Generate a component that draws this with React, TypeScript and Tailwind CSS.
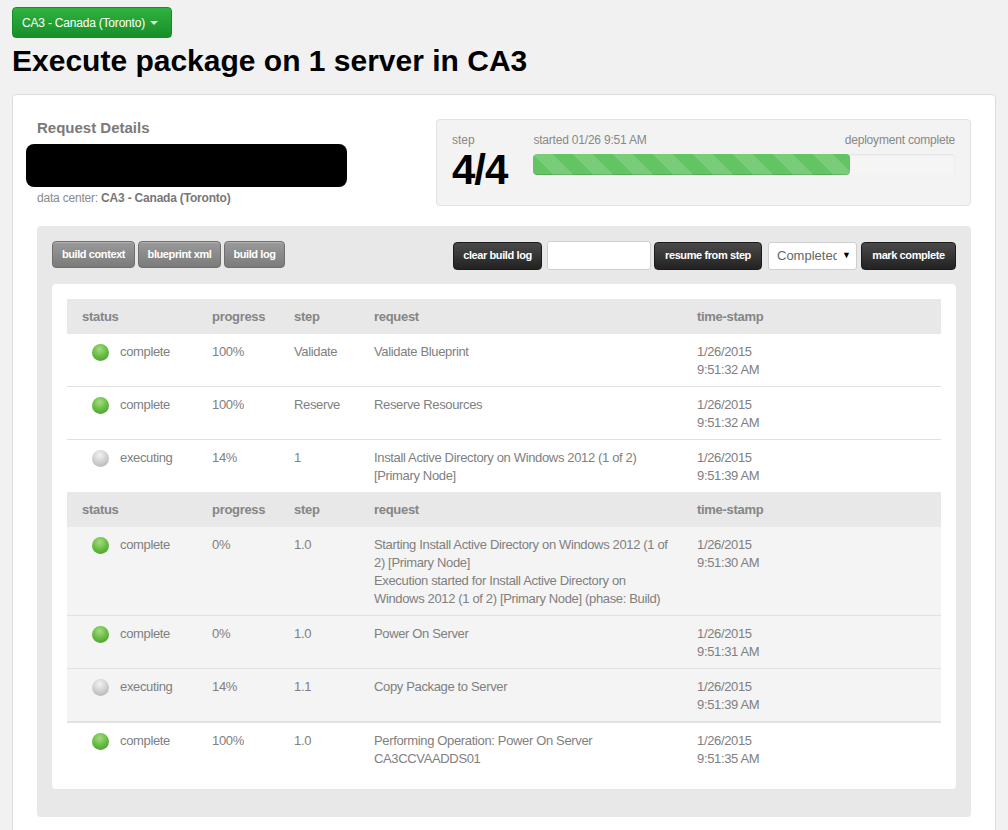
import React from 'react'

type Row = {
  status: 'complete' | 'executing'
  progress: string
  step: string
  request: string[]
  time: [string, string]
}

const TOP_ROWS: Row[] = [
  { status: 'complete', progress: '100%', step: 'Validate', request: ['Validate Blueprint'], time: ['1/26/2015', '9:51:32 AM'] },
  { status: 'complete', progress: '100%', step: 'Reserve', request: ['Reserve Resources'], time: ['1/26/2015', '9:51:32 AM'] },
  { status: 'executing', progress: '14%', step: '1', request: ['Install Active Directory on Windows 2012 (1 of 2) [Primary Node]'], time: ['1/26/2015', '9:51:39 AM'] },
]

const SUB_ROWS: Row[] = [
  {
    status: 'complete',
    progress: '0%',
    step: '1.0',
    request: [
      'Starting Install Active Directory on Windows 2012 (1 of 2) [Primary Node]',
      'Execution started for Install Active Directory on Windows 2012 (1 of 2) [Primary Node] (phase: Build)',
    ],
    time: ['1/26/2015', '9:51:30 AM'],
  },
  { status: 'complete', progress: '0%', step: '1.0', request: ['Power On Server'], time: ['1/26/2015', '9:51:31 AM'] },
  { status: 'executing', progress: '14%', step: '1.1', request: ['Copy Package to Server'], time: ['1/26/2015', '9:51:39 AM'] },
]

const LAST_ROW: Row = {
  status: 'complete',
  progress: '100%',
  step: '1.0',
  request: ['Performing Operation: Power On Server CA3CCVAADDS01'],
  time: ['1/26/2015', '9:51:35 AM'],
}

const GRID = 'grid grid-cols-[130px_82px_80px_323px_1fr]'

function StatusDot({ status }: { status: Row['status'] }) {
  return (
    <span
      className={`mt-[1px] block w-[17px] h-[17px] rounded-full flex-shrink-0 ${
        status === 'complete'
          ? 'bg-[radial-gradient(circle_at_45%_30%,#a4dc84_0%,#6cbf45_45%,#3f9424_100%)]'
          : 'bg-[radial-gradient(circle_at_45%_30%,#f2f2f2_0%,#cfcfcf_50%,#a9a9a9_100%)]'
      }`}
    />
  )
}

function HeaderRow() {
  return (
    <div className={`${GRID} h-[35px] items-center bg-[#e8e8e8] text-[13px] font-bold tracking-[-0.3px] text-[#858585]`}>
      <div className="pl-[15px]">status</div>
      <div className="pl-[15px]">progress</div>
      <div className="pl-[15px]">step</div>
      <div className="pl-[15px]">request</div>
      <div className="pl-[15px]">time-stamp</div>
    </div>
  )
}

function DataRow({ row, border = true, thick = false }: { row: Row; border?: boolean; thick?: boolean }) {
  return (
    <div
      className={`${GRID} pt-[9px] pb-[7px] text-[13px] leading-[18px] tracking-[-0.35px] text-[#808080] ${
        thick ? 'border-b-[2px] border-[#e2e2e2]' : border ? 'border-b border-[#e0e0e0]' : ''
      }`}
    >
      <div className="pl-[25px] flex items-start gap-[11px]">
        <StatusDot status={row.status} />
        <span>{row.status}</span>
      </div>
      <div className="pl-[15px]">{row.progress}</div>
      <div className="pl-[15px]">{row.step}</div>
      <div className="pl-[15px] pr-[8px]">
        {row.request.map((r) => (
          <div key={r}>{r}</div>
        ))}
      </div>
      <div className="pl-[15px]">
        <div>{row.time[0]}</div>
        <div>{row.time[1]}</div>
      </div>
    </div>
  )
}

function GrayButton({ children, w }: { children: React.ReactNode; w: string }) {
  return (
    <button
      className={`${w} h-[27px] rounded-[4px] border border-[#6f6f6f] bg-[linear-gradient(#9a9a9a,#7b7b7b)] text-[11px] font-bold tracking-[-0.4px] text-white shadow-[inset_0_1px_0_rgba(255,255,255,0.25)]`}
    >
      {children}
    </button>
  )
}

function DarkButton({ children, w }: { children: React.ReactNode; w: string }) {
  return (
    <button
      className={`${w} h-[28px] rounded-[4px] border border-[#1c1c1c] bg-[linear-gradient(#4a4a4a,#222222)] text-[11px] font-bold tracking-[-0.4px] text-white`}
    >
      {children}
    </button>
  )
}

export default function App() {
  return (
    <div className="min-h-screen bg-[#f1f1f1] px-3 pt-[7px] font-['Liberation_Sans',Arial,sans-serif] overflow-hidden">
      {/* Data center switcher */}
      <button className="h-[31px] w-[160px] flex items-center gap-[5px] pl-[9px] rounded-[4px] border border-[#1b8a2b] bg-[linear-gradient(#30b23f,#178f2a)] text-[12px] tracking-[-0.2px] text-white">
        CA3 - Canada (Toronto)
        <span className="block w-0 h-0 border-l-[4px] border-r-[4px] border-t-[4px] border-l-transparent border-r-transparent border-t-[#d9f2dc]" />
      </button>

      <h1 className="mt-[5px] text-[30px] leading-[36px] font-bold text-black">Execute package on 1 server in CA3</h1>

      <div className="mt-[15px] w-[984px] bg-white border border-[#dcdcdc] rounded-[4px] px-[24px] pt-[24px] pb-[40px]">
        {/* Summary */}
        <div className="flex justify-between">
          <div>
            <h2 className="text-[15px] leading-[18px] font-bold text-[#7a7a7a]">Request Details</h2>
            <div className="mt-[7px] -ml-[11px] w-[321px] h-[43px] rounded-[8px] bg-black" />
            <p className="mt-[3px] text-[12px] leading-[16px] tracking-[-0.2px] text-[#8a8a8a]">
              data center: <span className="font-bold text-[#777]">CA3 - Canada (Toronto)</span>
            </p>
          </div>

          <div className="w-[535px] h-[87px] bg-[#f3f3f3] border border-[#e2e2e2] rounded-[4px] pl-[15px] pr-[15px] pt-[12px] flex gap-[26px]">
            <div>
              <div className="text-[12px] leading-[16px] text-[#888]">step</div>
              <div className="text-[42px] leading-[44px] font-bold tracking-[-1px] text-black">4/4</div>
            </div>
            <div className="flex-1">
              <div className="flex justify-between text-[12px] leading-[16px] tracking-[-0.2px] text-[#888]">
                <span>started 01/26 9:51 AM</span>
                <span>deployment complete</span>
              </div>
              <div className="mt-[6px] h-[21px] rounded-[4px] bg-[#f5f5f5] shadow-[inset_0_1px_2px_rgba(0,0,0,0.08)] overflow-hidden">
                <div className="h-full w-[75%] rounded-[4px] bg-[#62c462] bg-[linear-gradient(45deg,rgba(255,255,255,0.15)_25%,transparent_25%,transparent_50%,rgba(255,255,255,0.15)_50%,rgba(255,255,255,0.15)_75%,transparent_75%,transparent)] bg-[length:40px_40px] shadow-[inset_0_-1px_0_rgba(0,0,0,0.12)]" />
              </div>
            </div>
          </div>
        </div>

        {/* Build log panel */}
        <div className="mt-[20px] bg-[#e8e8e8] rounded-[4px] px-[15px] pt-[15px] pb-[28px]">
          <div className="flex justify-between items-start">
            <div className="flex gap-[3px]">
              <GrayButton w="w-[83px]">build context</GrayButton>
              <GrayButton w="w-[83px]">blueprint xml</GrayButton>
              <GrayButton w="w-[61px]">build log</GrayButton>
            </div>
            <div className="flex items-center">
              <DarkButton w="w-[89px]">clear build log</DarkButton>
              <input className="ml-[5px] w-[104px] h-[29px] bg-white border border-[#cfcfcf] rounded-[3px]" />
              <div className="ml-[3px]">
                <DarkButton w="w-[108px]">resume from step</DarkButton>
              </div>
              <div className="ml-[6px] w-[89px] h-[28px] bg-white border border-[#cfcfcf] rounded-[3px] flex items-center justify-between pl-[8px] pr-[5px] text-[13px] text-[#666] overflow-hidden">
                <span className="whitespace-nowrap overflow-hidden w-[60px]">Completed</span>
                <span className="text-[9px] text-black">▼</span>
              </div>
              <div className="ml-[4px]">
                <DarkButton w="w-[95px]">mark complete</DarkButton>
              </div>
            </div>
          </div>

          <div className="mt-[14px] bg-white rounded-[4px] p-[15px] pb-[14px]">
            <HeaderRow />
            {TOP_ROWS.map((r, i) => (
              <DataRow key={i} row={r} border={i < TOP_ROWS.length - 1} />
            ))}
            <div className="bg-[#f4f4f4]">
              <HeaderRow />
              {SUB_ROWS.map((r, i) => (
                <DataRow key={i} row={r} thick={i === SUB_ROWS.length - 1} />
              ))}
            </div>
            <DataRow row={LAST_ROW} border={false} />
          </div>
        </div>
      </div>
    </div>
  )
}
